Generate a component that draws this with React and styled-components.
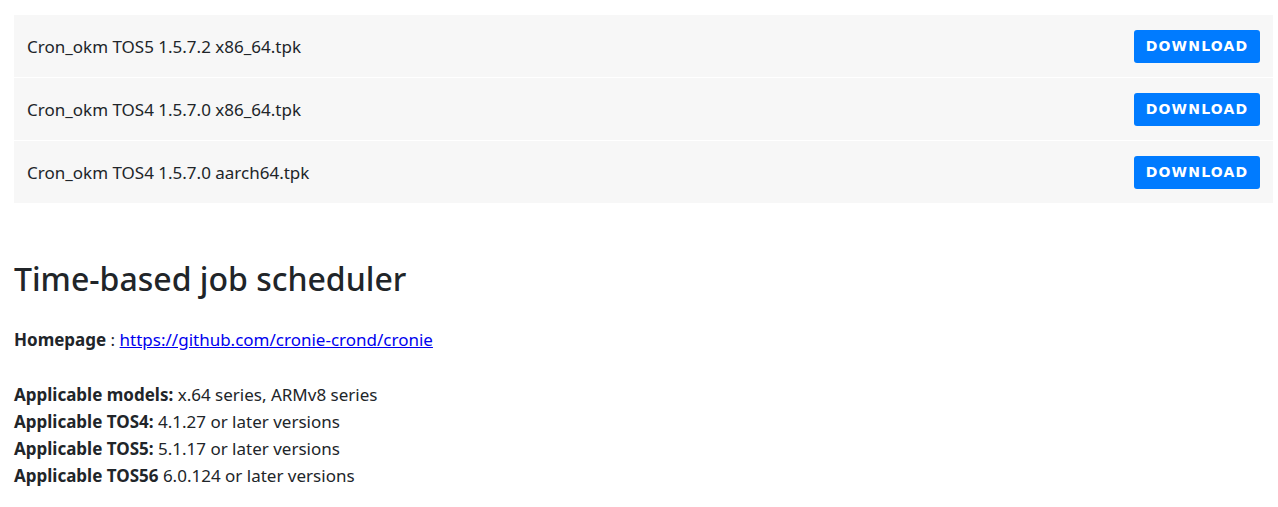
import React from 'react'
import styled, { createGlobalStyle } from 'styled-components'

const Global = createGlobalStyle`
  body {
    margin: 0;
    background: #fff;
    font-family: "Noto Sans", "Open Sans", sans-serif;
    color: #212529;
  }
`

const Page = styled.div`
  padding: 15px 5px 20px 14px;
`

const FileList = styled.div`
  display: flex;
  flex-direction: column;
  gap: 1px;
`

const FileRow = styled.div`
  display: flex;
  align-items: center;
  justify-content: space-between;
  height: 62px;
  padding: 0 13px;
  background: #f7f7f7;
  font-size: 17px;
  color: #212529;
`

const DownloadButton = styled.a`
  display: inline-flex;
  align-items: center;
  justify-content: center;
  width: 126px;
  height: 33px;
  background: #007bff;
  color: #fff;
  border-radius: 3px;
  font-family: "DejaVu Sans", sans-serif;
  font-weight: 900;
  font-size: 14px;
  letter-spacing: 1.2px;
  text-decoration: none;
`

const Title = styled.h2`
  margin: 52px 0 0;
  font-size: 32px;
  font-weight: 500;
  line-height: 48px;
  color: #212529;
`

const Info = styled.div`
  margin-top: 23px;
  font-size: 17px;
  line-height: 27px;
  color: #212529;
`

const Gap = styled.div`
  height: 28px;
`

const Link = styled.a`
  color: #0000ee;
  text-decoration: underline;
`

const files = [
  'Cron_okm TOS5 1.5.7.2 x86_64.tpk',
  'Cron_okm TOS4 1.5.7.0 x86_64.tpk',
  'Cron_okm TOS4 1.5.7.0 aarch64.tpk',
]

export default function App () {
  return (
    <Page>
      <Global />
      <FileList>
        {files.map(f => (
          <FileRow key={f}>
            <span>{f}</span>
            <DownloadButton href="#">DOWNLOAD</DownloadButton>
          </FileRow>
        ))}
      </FileList>
      <Title>Time-based job scheduler</Title>
      <Info>
        <div><b>Homepage</b> : <Link href="#">https://github.com/cronie-crond/cronie</Link></div>
        <Gap />
        <div><b>Applicable models:</b> x.64 series, ARMv8 series</div>
        <div><b>Applicable TOS4:</b> 4.1.27 or later versions</div>
        <div><b>Applicable TOS5:</b> 5.1.17 or later versions</div>
        <div><b>Applicable TOS56</b> 6.0.124 or later versions</div>
      </Info>
    </Page>
  )
}
